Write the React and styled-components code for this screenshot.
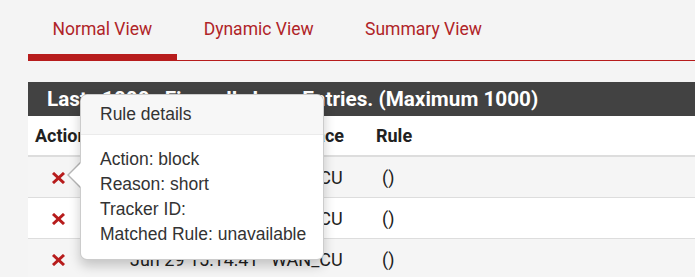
import React from 'react';
import styled, { createGlobalStyle } from 'styled-components';

const GlobalStyle = createGlobalStyle`
  html, body {
    margin: 0;
    padding: 0;
    background: #f4f4f4;
    overflow: hidden;
  }
  body {
    font-family: Roboto, "Liberation Sans", sans-serif;
    color: #212121;
  }
`;

const Page = styled.div`
  padding-left: 28px;
  margin-right: -12px;
`;

const Tabs = styled.ul`
  display: flex;
  list-style: none;
  margin: 0;
  padding: 0;
  border-bottom: 1px solid #b71c1c;
`;

const Tab = styled.li`
  margin: 0 2.5px -1px 0;
  padding: 17px 24.5px 12px;
  font-size: 17.5px;
  line-height: 25px;
  color: #b02428;
  border-bottom: 7px solid ${(p) => (p.$active ? '#b71c1c' : 'transparent')};
  cursor: pointer;
`;

const Panel = styled.section`
  position: relative;
  margin-top: 21px;
  background: #fff;
`;

const PanelHeading = styled.h2`
  margin: 0;
  height: 34px;
  padding: 0 19px;
  background: #424242;
  color: #fff;
  font-size: 20.7px;
  font-weight: 700;
  line-height: 34px;
  white-space: nowrap;
`;

const HeadingLead = styled.span`
  word-spacing: 10px;
`;

const Table = styled.table`
  width: 100%;
  border-collapse: collapse;
  table-layout: fixed;
  font-size: 18px;
  line-height: 25px;

  th {
    padding: 7px 7px;
    text-align: left;
    font-weight: 700;
    border-bottom: 2px solid #ddd;
    white-space: nowrap;
  }

  td {
    padding: 7.5px 7px;
    border-top: 1px solid #ddd;
    white-space: nowrap;
  }

  tbody tr:first-child td {
    border-top: 0;
  }

  tbody tr:nth-child(odd) {
    background: #f5f5f5;
  }
`;

const ActionCell = styled.td`
  && {
    padding-left: 23px;
  }
`;

const RuleText = styled.span`
  margin-left: 6px;
`;

const Popover = styled.div`
  position: absolute;
  left: 52px;
  top: 12px;
  width: 242px;
  background: #fff;
  border: 1px solid rgba(0, 0, 0, 0.2);
  border-radius: 7px;
  box-shadow: 0 6px 12px rgba(0, 0, 0, 0.2);
  font-family: "Liberation Sans", Arial, sans-serif;
  font-size: 17.5px;
  line-height: 25px;
  color: #333;
  white-space: nowrap;

  &::before,
  &::after {
    content: '';
    position: absolute;
    top: 67px;
    border-style: solid;
    border-color: transparent;
  }
  &::before {
    left: -14px;
    border-width: 13px 13px 13px 0;
    border-right-color: rgba(0, 0, 0, 0.25);
  }
  &::after {
    left: -12px;
    top: 68px;
    border-width: 12px 12px 12px 0;
    border-right-color: #fff;
  }
`;

const PopoverTitle = styled.div`
  padding: 7px 19px;
  background: #f7f7f7;
  border-bottom: 1px solid #ebebeb;
  border-radius: 7px 7px 0 0;
`;

const PopoverBody = styled.div`
  padding: 12px 10px 12px 19px;
`;

const BlockIcon = () => (
  <svg width="15" height="12" viewBox="0 0 15 12" aria-hidden="true">
    <path d="M2 1 L13 11 M13 1 L2 11" stroke="#b71c1c" strokeWidth="3" strokeLinecap="butt" />
  </svg>
);

const rows = [
  { time: 'Jun 29 15:14:41', iface: 'WAN_CU', rule: '()' },
  { time: 'Jun 29 15:14:41', iface: 'WAN_CU', rule: '()' },
  { time: 'Jun 29 15:14:41', iface: 'WAN_CU', rule: '()' },
];

export default function App() {
  return (
    <Page>
      <GlobalStyle />
      <Tabs>
        <Tab $active>Normal View</Tab>
        <Tab>Dynamic View</Tab>
        <Tab>Summary View</Tab>
      </Tabs>

      <Panel>
        <PanelHeading>
          <HeadingLead>Last 1000 Firewall Log Entries.</HeadingLead> (Maximum 1000)
        </PanelHeading>
        <Table>
          <colgroup>
            <col style={{ width: 95 }} />
            <col style={{ width: 141 }} />
            <col style={{ width: 105 }} />
            <col />
          </colgroup>
          <thead>
            <tr>
              <th>Action</th>
              <th>Time</th>
              <th>Interface</th>
              <th>Rule</th>
            </tr>
          </thead>
          <tbody>
            {rows.map((r, i) => (
              <tr key={i}>
                <ActionCell><BlockIcon /></ActionCell>
                <td>{r.time}</td>
                <td>{r.iface}</td>
                <td><RuleText>{r.rule}</RuleText></td>
              </tr>
            ))}
          </tbody>
        </Table>

        <Popover>
          <PopoverTitle>Rule details</PopoverTitle>
          <PopoverBody>
            <div>Action: block</div>
            <div>Reason: short</div>
            <div>Tracker ID:</div>
            <div>Matched Rule: unavailable</div>
          </PopoverBody>
        </Popover>
      </Panel>
    </Page>
  );
}
